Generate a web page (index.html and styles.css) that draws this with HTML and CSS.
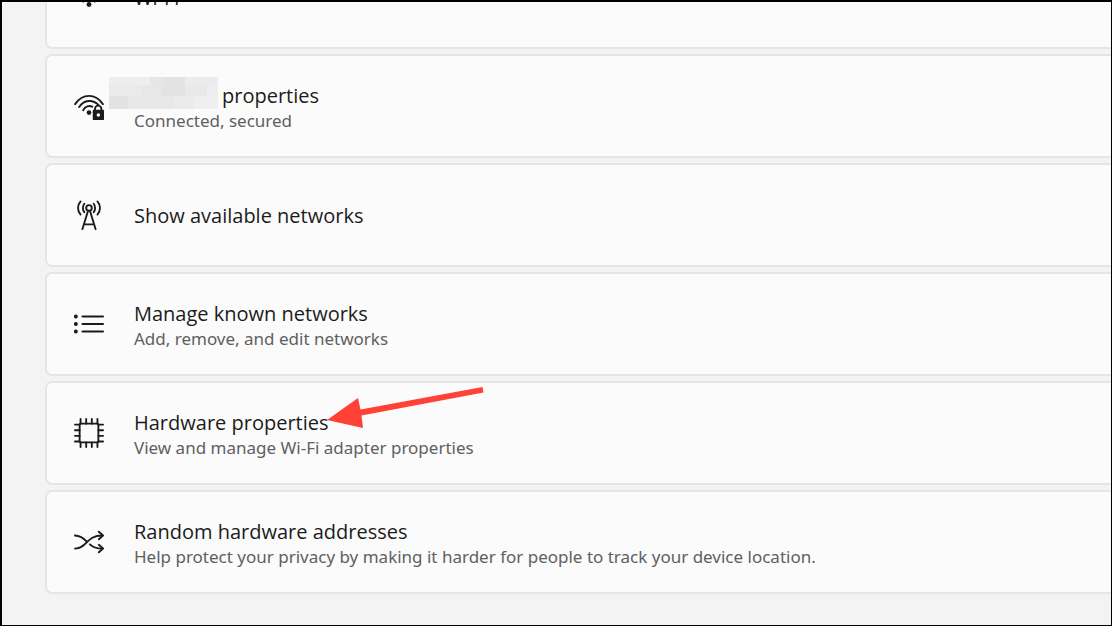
FILE: index.html
```html
<!DOCTYPE html>
<html lang="en">
<head>
    <meta charset="UTF-8">
    <meta name="viewport" content="width=device-width, initial-scale=1.0">
    <title>Wi-Fi Settings</title>
    <link rel="stylesheet" href="styles.css">
</head>
<body>
    <main class="settings">
        <ul class="settings-list">
            <!-- Wi-Fi -->
            <li>
                <a class="card" href="#wifi">
                    <svg class="icon" viewBox="0 0 32 32" aria-hidden="true">
                        <path d="M2 13 Q16 -3 30 13 M6 17 Q16 6 26 17 M10 21 Q16 15 22 21"/>
                        <circle class="solid" cx="16" cy="24" r="2.6"/>
                    </svg>
                    <span class="text">
                        <span class="title">Wi-Fi</span>
                    </span>
                </a>
            </li>

            <!-- Current network -->
            <li>
                <a class="card" href="#properties">
                    <svg class="icon" viewBox="0 0 32 32" aria-hidden="true">
                        <path d="M1.2 14 C9 2.2 23 2.2 30.8 14 M5.5 17 C11 9.2 20 8.8 26 14.8 M9.8 20.5 C12 16.3 16 15.2 19.5 16.7"/>
                        <circle class="solid" cx="16" cy="23" r="2.5"/>
                        <path d="M22.4 21 V19 a3.4 3.4 0 0 1 6.8 0 V21"/>
                        <rect class="solid" x="20" y="20" width="12" height="11" rx="1"/>
                        <circle class="hole" cx="26" cy="25.5" r="1.9"/>
                    </svg>
                    <span class="text">
                        <span class="title network-name"><span class="blurred"></span>properties</span>
                        <span class="description">Connected, secured</span>
                    </span>
                </a>
            </li>

            <!-- Available networks -->
            <li>
                <a class="card" href="#available">
                    <svg class="icon" viewBox="0 0 32 32" aria-hidden="true">
                        <circle cx="16" cy="8.5" r="3"/>
                        <path d="M15 11.5 L9 31 M17 11.5 L23 31 M11 26 H21"/>
                        <path d="M11 4 C9 6.5 9 10.5 11 13 M21 4 C23 6.5 23 10.5 21 13"/>
                        <path d="M7 1.5 C3.4 5.5 3.4 11.5 7 15.5 M25 1.5 C28.6 5.5 28.6 11.5 25 15.5"/>
                    </svg>
                    <span class="text">
                        <span class="title">Show available networks</span>
                    </span>
                </a>
            </li>

            <!-- Known networks -->
            <li>
                <a class="card" href="#known">
                    <svg class="icon" viewBox="0 0 32 32" aria-hidden="true">
                        <circle class="solid" cx="2" cy="8" r="2.1"/>
                        <circle class="solid" cx="2" cy="16" r="2.1"/>
                        <circle class="solid" cx="2" cy="24" r="2.1"/>
                        <path d="M9 8 H31 M9 16 H31 M9 24 H31"/>
                    </svg>
                    <span class="text">
                        <span class="title">Manage known networks</span>
                        <span class="description">Add, remove, and edit networks</span>
                    </span>
                </a>
            </li>

            <!-- Hardware -->
            <li class="highlighted">
                <a class="card" href="#hardware">
                    <svg class="icon" viewBox="0 0 32 32" aria-hidden="true">
                        <rect x="6" y="6" width="20" height="20" rx="1.2"/>
                        <path d="M7 6 V1 M13 6 V1 M19 6 V1 M25 6 V1 M7 26 V31 M13 26 V31 M19 26 V31 M25 26 V31"/>
                        <path d="M6 7 H1 M6 13 H1 M6 19 H1 M6 25 H1 M26 7 H31 M26 13 H31 M26 19 H31 M26 25 H31"/>
                    </svg>
                    <span class="text">
                        <span class="title">Hardware properties</span>
                        <span class="description">View and manage Wi-Fi adapter properties</span>
                    </span>
                </a>
                <svg class="arrow" viewBox="0 0 158 42" aria-hidden="true">
                    <path d="M0 32 L31 10 L33.5 21.5 L155.5 -1 L156.5 4.5 L34.5 27.5 L36 40 Z"/>
                </svg>
            </li>

            <!-- Random addresses -->
            <li>
                <a class="card" href="#random">
                    <svg class="icon" viewBox="0 0 32 32" aria-hidden="true">
                        <path d="M1 9 C7 9 10 11.5 14 15.8 M1 23 C14 23 13 9 30 9 M17 18.5 C20 21.5 23 23 30 23"/>
                        <path d="M26.5 5 L31 9 L26.5 13 M26.5 19 L31 23 L26.5 27"/>
                    </svg>
                    <span class="text">
                        <span class="title">Random hardware addresses</span>
                        <span class="description">Help protect your privacy by making it harder for people to track your device location.</span>
                    </span>
                </a>
            </li>
        </ul>
    </main>
</body>
</html>
```
FILE: styles.css
```css
/* General Reset */
* {
    margin: 0;
    padding: 0;
    box-sizing: border-box;
}

body {
    font-family: 'Noto Sans', 'Open Sans', sans-serif;
    background-color: #f3f3f3;
    color: #1b1b1b;
}

/* Page frame */
.settings {
    height: 100vh;
    overflow: hidden;
    border: solid #000;
    border-width: 2px 1px 1px 2px;
    padding-left: 43px;
}

.settings-list {
    display: flex;
    flex-direction: column;
    gap: 5px;
    margin-top: -57px;
    list-style: none;
}

/* Cards */
.card {
    display: flex;
    align-items: center;
    gap: 30px;
    height: 104px;
    padding: 0 27px;
    border: 2px solid #e5e5e5;
    border-right: none;
    border-radius: 7px 0 0 7px;
    background-color: #fbfbfb;
    color: inherit;
    text-decoration: none;
}

.text {
    display: flex;
    flex-direction: column;
    padding-top: 2px;
}

.title {
    font-family: 'Open Sans', 'Noto Sans', sans-serif;
    font-size: 20px;
    line-height: 28px;
}

.description {
    font-size: 17px;
    line-height: 22px;
    color: #606060;
}

/* Icons */
.icon {
    width: 30px;
    height: 30px;
    flex-shrink: 0;
    fill: none;
    stroke: #1b1b1b;
    stroke-width: 2;
    stroke-linecap: round;
    stroke-linejoin: round;
}

.icon .solid {
    fill: #1b1b1b;
    stroke: none;
}

.icon .hole {
    fill: #fbfbfb;
    stroke: none;
}

/* Hidden network name */
.network-name {
    position: relative;
    padding-left: 88px;
}

.blurred {
    position: absolute;
    left: -25px;
    top: -5px;
    width: 109px;
    height: 32px;
    background:
        linear-gradient(90deg, #e2e2e2 17%, #e8e8e8 17% 60%, #ebebeb 60% 78%, #efefef 78%) 0 100% / 100% 13px no-repeat,
        linear-gradient(90deg, #eaeaea 30%, #e7e7e7 30% 48%, #e3e3e3 48% 70%, #e9e9e9 70% 90%, #eeeeee 90%) 0 8px / 100% 11px no-repeat,
        linear-gradient(90deg, #eeeeee 38%, #e6e6e6 38% 50%, #e3e3e3 50% 70%, #ececec 70%);
}

/* Pointer arrow */
.highlighted {
    position: relative;
}

.arrow {
    position: absolute;
    left: 282px;
    top: 7px;
    width: 158px;
    height: 42px;
    overflow: visible;
    fill: #ff4136;
    pointer-events: none;
}
```
